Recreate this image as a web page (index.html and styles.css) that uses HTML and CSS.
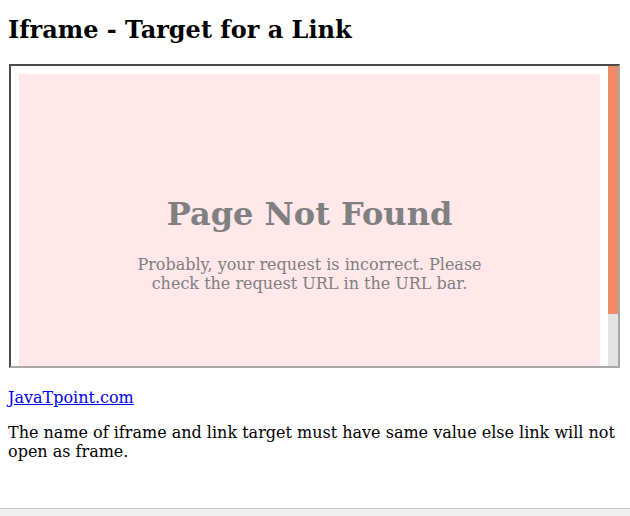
FILE: index.html
```html
<!DOCTYPE html>
<html>
<head>
<meta charset="utf-8">
<title>Iframe - Target for a Link</title>
<link rel="stylesheet" href="styles.css">
</head>
<body>
<h2 class="title">Iframe - Target for a Link</h2>
<div class="frame">
  <div class="frame-view">
    <div class="nf">
      <h1 class="nf-title">Page Not Found</h1>
      <p class="nf-text">Probably, your request is incorrect. Please check the request URL in the URL bar.</p>
    </div>
  </div>
  <div class="scrollbar"><div class="thumb"></div></div>
</div>
<p class="link-line"><a href="#" class="link">JavaTpoint.com</a></p>
<p class="note">The name of iframe and link target must have same value else link will not open as frame.</p>
<div class="hbar"></div>
</body>
</html>
```
FILE: styles.css
```css
html, body {
  margin: 0;
  padding: 0;
}
body {
  padding: 0 8px;
  font-family: "DejaVu Serif", serif;
  font-size: 16px;
  color: #000;
  background: #fff;
  overflow: hidden;
}
.title {
  font-size: 24px;
  font-weight: bold;
  line-height: 28px;
  margin: 0;
  padding-top: 16px;
  margin-bottom: 20px;
}
.frame {
  box-sizing: border-box;
  width: 611px;
  height: 304px;
  margin-left: 1px;
  border: 2px solid;
  border-color: #4a4a4a #a8a8a8 #a8a8a8 #4a4a4a;
  display: flex;
  overflow: hidden;
}
.frame-view {
  flex: 1;
  padding: 8px 8px 0 8px;
  overflow: hidden;
  background: #fff;
}
.nf {
  background: #ffe7ea;
  height: 400px;
  padding-top: 122px;
  box-sizing: border-box;
  text-align: center;
  color: #808080;
}
.nf-title {
  font-size: 32px;
  line-height: 37px;
  margin: 0;
  font-weight: bold;
}
.nf-text {
  margin: 22px auto 0;
  width: 360px;
  line-height: 19px;
}
.scrollbar {
  width: 10px;
  background: #e3e3e3;
  flex: none;
}
.thumb {
  height: 248px;
  background: #ee8b68;
}
.link-line {
  margin: 20px 0 0;
  line-height: 19px;
}
.link {
  color: #0000ee;
  text-decoration: underline;
}
.note {
  margin: 16px 0 0;
  line-height: 19px;
}
.hbar {
  position: fixed;
  left: 0;
  right: 0;
  bottom: 0;
  height: 7px;
  border-top: 1px solid #c6c6c6;
  background: #efefef;
}
```
